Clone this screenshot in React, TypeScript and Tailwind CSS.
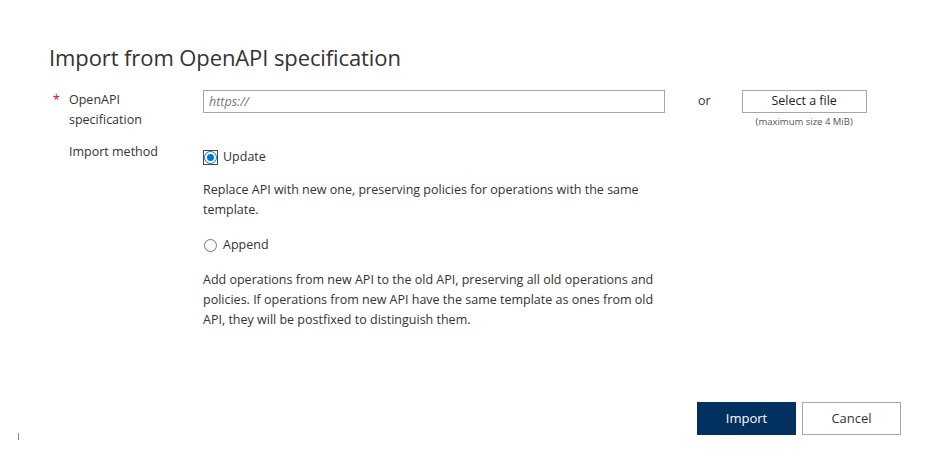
import { useState } from "react";

function Radio({ checked, focused }: { checked: boolean; focused?: boolean }) {
  return (
    <span
      className={`flex h-[15px] w-[15px] items-center justify-center ${
        focused ? "border border-[#3a4a5c]" : ""
      }`}
    >
      <span
        className={`flex h-[13px] w-[13px] items-center justify-center rounded-full border ${
          checked ? "border-[#0078d7]" : "border-[#767676]"
        } bg-white`}
      >
        {checked && <span className="h-[7px] w-[7px] rounded-full bg-[#0078d7]" />}
      </span>
    </span>
  );
}

export default function App() {
  const [method, setMethod] = useState("update");

  return (
    <div
      className="relative h-[470px] w-[942px] bg-white text-[#333] text-[12.5px]"
      style={{ fontFamily: '"Open Sans", "Noto Sans", sans-serif' }}
    >
      <div className="pl-[49px] pt-[42px]">
        <h1 className="text-[22px] leading-[30px] text-[#333] tracking-[-0.1px]">
          Import from OpenAPI specification
        </h1>

        <div className="mt-[18px] flex">
          <div className="flex w-[154px] shrink-0">
            <span className="w-[20px] pl-[4px] text-[#e00] leading-[20px]">*</span>
            <span className="leading-[20px]">
              OpenAPI
              <br />
              specification
            </span>
          </div>
          <input
            className="h-[23px] w-[462px] border border-[#a6a6a6] px-[5px] text-[12.5px] italic placeholder:text-[#767676] outline-none"
            placeholder="https://"
          />
          <span className="ml-[33px] mt-[1px] leading-[20px]">or</span>
          <div className="ml-[31px] flex flex-col items-center">
            <button className="h-[23px] w-[125px] border border-[#a6a6a6] text-[12.5px] text-[#222]">
              Select a file
            </button>
            <span className="mt-[2px] text-[9.5px] text-[#555]">(maximum size 4 MiB)</span>
          </div>
        </div>

        <div className="mt-[12px] flex">
          <div className="w-[154px] shrink-0 pl-[20px] leading-[20px]">Import method</div>
          <div className="w-[460px]">
            <label
              className="mt-[5px] flex items-center gap-[5px] leading-[20px]"
              onClick={() => setMethod("update")}
            >
              <Radio checked={method === "update"} focused />
              Update
            </label>
            <p className="mt-[13px] leading-[20px]">
              Replace API with new one, preserving policies for operations with the same template.
            </p>
            <label
              className="mt-[15px] flex items-center gap-[5px] leading-[20px]"
              onClick={() => setMethod("append")}
            >
              <Radio checked={method === "append"} />
              Append
            </label>
            <p className="mt-[15px] leading-[20px]">
              Add operations from new API to the old API, preserving all old operations and
              policies. If operations from new API have the same template as ones from old API,
              they will be postfixed to distinguish them.
            </p>
          </div>
        </div>
      </div>

      <div className="absolute left-[697px] top-[402px] flex gap-[6px]">
        <button className="h-[33px] w-[99px] bg-[#02315f] text-[13px] text-white">Import</button>
        <button className="h-[33px] w-[99px] border border-[#a6a6a6] bg-white text-[13px] text-[#333]">
          Cancel
        </button>
      </div>

      <span className="absolute left-[18px] top-[433px] h-[7px] w-px bg-[#888]" />
    </div>
  );
}
